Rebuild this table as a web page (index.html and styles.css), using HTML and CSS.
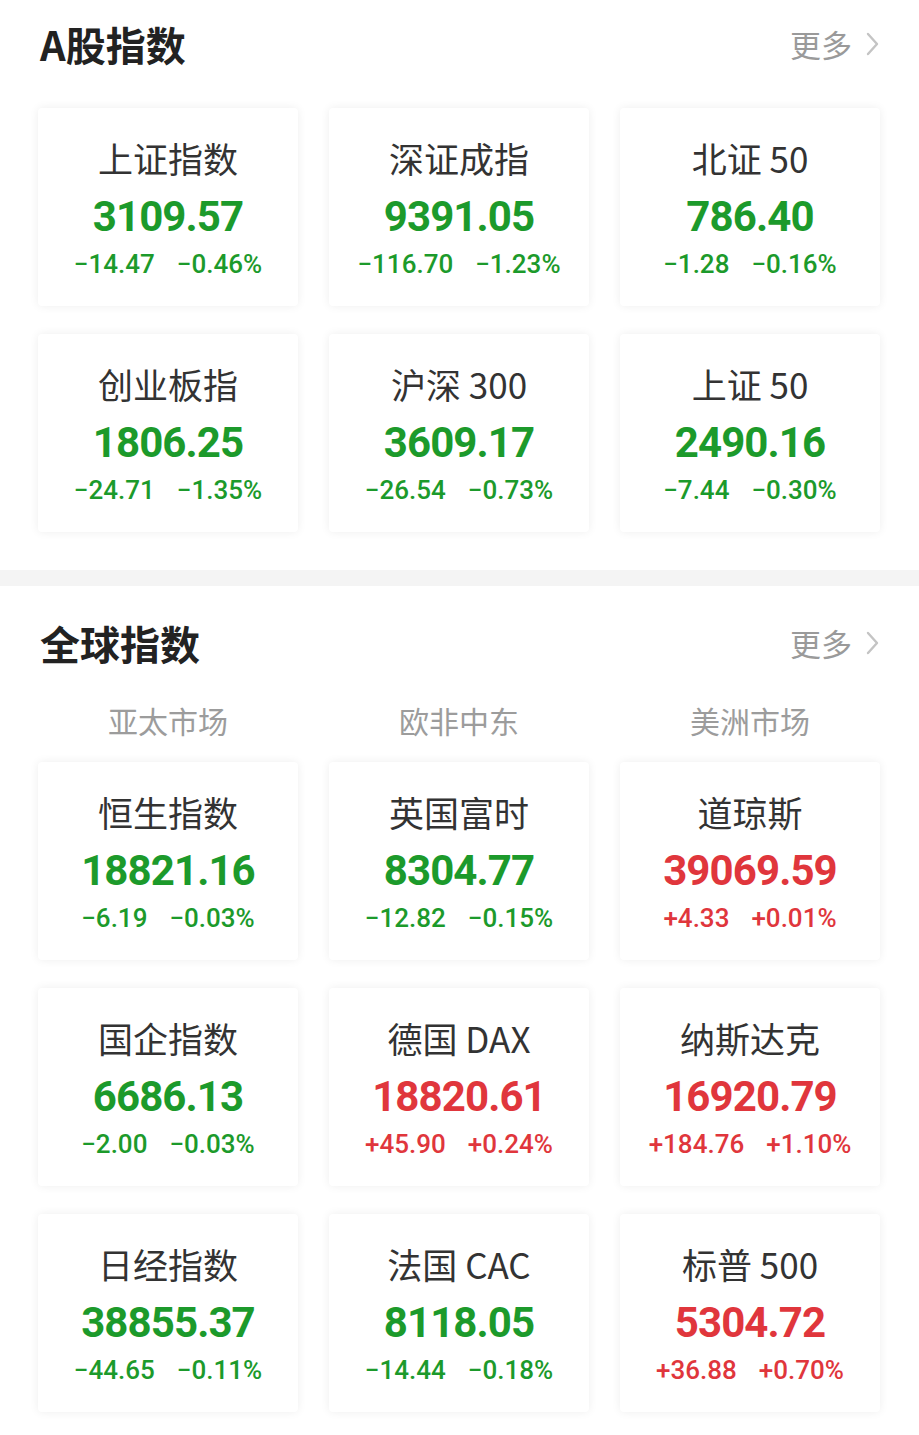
FILE: index.html
```html
<!DOCTYPE html>
<html lang="zh-CN">
<head>
<meta charset="utf-8">
<link rel="stylesheet" href="styles.css">
</head>
<body>
<section class="section first">
  <div class="head">
    <h2 class="title">A股指数</h2>
    <div class="more">更多<svg class="chev" width="14" height="24" viewBox="0 0 14 24"><path d="M2 2 L11 12 L2 22" fill="none" stroke="#c4c4c4" stroke-width="2.4" stroke-linecap="round" stroke-linejoin="round"/></svg></div>
  </div>
  <div class="grid">
    <div class="card"><div class="name">上证指数</div><div class="val down">3109.57</div><div class="chg down"><span>−14.47</span><span>−0.46%</span></div></div>
    <div class="card"><div class="name">深证成指</div><div class="val down">9391.05</div><div class="chg down"><span>−116.70</span><span>−1.23%</span></div></div>
    <div class="card"><div class="name">北证 50</div><div class="val down">786.40</div><div class="chg down"><span>−1.28</span><span>−0.16%</span></div></div>
    <div class="card"><div class="name">创业板指</div><div class="val down">1806.25</div><div class="chg down"><span>−24.71</span><span>−1.35%</span></div></div>
    <div class="card"><div class="name">沪深 300</div><div class="val down">3609.17</div><div class="chg down"><span>−26.54</span><span>−0.73%</span></div></div>
    <div class="card"><div class="name">上证 50</div><div class="val down">2490.16</div><div class="chg down"><span>−7.44</span><span>−0.30%</span></div></div>
  </div>
</section>
<div class="sep"></div>
<section class="section second">
  <div class="head">
    <h2 class="title">全球指数</h2>
    <div class="more">更多<svg class="chev" width="14" height="24" viewBox="0 0 14 24"><path d="M2 2 L11 12 L2 22" fill="none" stroke="#c4c4c4" stroke-width="2.4" stroke-linecap="round" stroke-linejoin="round"/></svg></div>
  </div>
  <div class="tabs">
    <div class="tab">亚太市场</div>
    <div class="tab">欧非中东</div>
    <div class="tab">美洲市场</div>
  </div>
  <div class="grid">
    <div class="card"><div class="name">恒生指数</div><div class="val down">18821.16</div><div class="chg down"><span>−6.19</span><span>−0.03%</span></div></div>
    <div class="card"><div class="name">英国富时</div><div class="val down">8304.77</div><div class="chg down"><span>−12.82</span><span>−0.15%</span></div></div>
    <div class="card"><div class="name">道琼斯</div><div class="val up">39069.59</div><div class="chg up"><span>+4.33</span><span>+0.01%</span></div></div>
    <div class="card"><div class="name">国企指数</div><div class="val down">6686.13</div><div class="chg down"><span>−2.00</span><span>−0.03%</span></div></div>
    <div class="card"><div class="name">德国 DAX</div><div class="val up">18820.61</div><div class="chg up"><span>+45.90</span><span>+0.24%</span></div></div>
    <div class="card"><div class="name">纳斯达克</div><div class="val up">16920.79</div><div class="chg up"><span>+184.76</span><span>+1.10%</span></div></div>
    <div class="card"><div class="name">日经指数</div><div class="val down">38855.37</div><div class="chg down"><span>−44.65</span><span>−0.11%</span></div></div>
    <div class="card"><div class="name">法国 CAC</div><div class="val down">8118.05</div><div class="chg down"><span>−14.44</span><span>−0.18%</span></div></div>
    <div class="card"><div class="name">标普 500</div><div class="val up">5304.72</div><div class="chg up"><span>+36.88</span><span>+0.70%</span></div></div>
  </div>
</section>
</body>
</html>
```

FILE: styles.css
```css
* { box-sizing: border-box; }
html, body { margin: 0; padding: 0; background: #ffffff; }
body {
  width: 919px;
  font-family: "Noto Sans CJK SC", "Noto Sans", sans-serif;
  color: #333333;
}
.section { padding: 0 39px 0 38px; }
.first { padding-top: 20px; padding-bottom: 38px; }
.second { padding-top: 33px; padding-bottom: 23px; }
.head {
  display: flex;
  justify-content: space-between;
  align-items: center;
  height: 48px;
}
.title {
  margin: 0 0 0 2px;
  font-size: 40px;
  font-weight: 700;
  line-height: 48px;
  color: #222222;
}
.more {
  display: flex;
  align-items: center;
  gap: 14px;
  font-size: 31px;
  line-height: 48px;
  color: #9a9a9a;
}
.chev { display: block; }
.first .head { margin-bottom: 40px; }
.second .head { margin-bottom: 33px; }
.tabs {
  display: grid;
  grid-template-columns: repeat(3, 1fr);
  column-gap: 31px;
  height: 40px;
  margin-bottom: 22px;
}
.tab {
  text-align: center;
  font-size: 30px;
  line-height: 40px;
  color: #9c9c9c;
}
.grid {
  display: grid;
  grid-template-columns: repeat(3, 1fr);
  column-gap: 31px;
  row-gap: 28px;
}
.card {
  height: 198px;
  background: #ffffff;
  border-radius: 4px;
  box-shadow: 0 0 10px rgba(0, 0, 0, 0.07);
  padding-top: 32px;
  text-align: center;
}
.name {
  font-size: 35px;
  line-height: 36px;
  height: 36px;
  color: #333333;
}
.val {
  margin-top: 17px;
  font-family: Roboto, "Noto Sans", sans-serif;
  font-weight: 700;
  font-size: 42px;
  line-height: 48px;
  letter-spacing: -0.9px;
}
.chg {
  margin-top: 8px;
  display: flex;
  justify-content: center;
  gap: 22px;
  font-family: Roboto, "Noto Sans", sans-serif;
  font-weight: 500;
  font-size: 26px;
  line-height: 30px;
}
.down { color: #1c9a2b; }
.up { color: #e0363c; }
.sep { height: 16px; background: #f4f4f4; }
```
